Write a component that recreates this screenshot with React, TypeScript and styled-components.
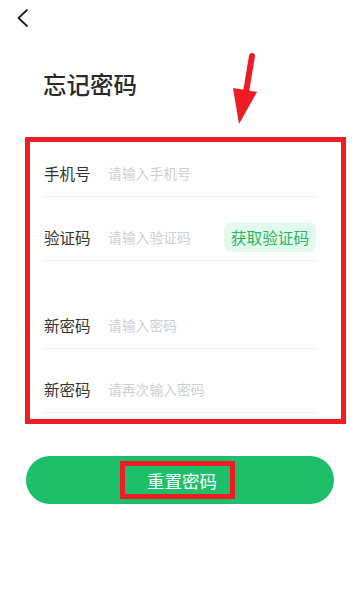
import React from "react";
import styled, { createGlobalStyle } from "styled-components";

const Global = createGlobalStyle`
  html, body { margin: 0; padding: 0; background: #ffffff; }
  body { font-family: "Noto Sans CJK SC", "Noto Sans", sans-serif; }
  * { box-sizing: border-box; }
`;

const Page = styled.div`
  position: relative;
  width: 360px;
  height: 610px;
  background: #ffffff;
  display: flex;
  flex-direction: column;
`;

const Header = styled.div`
  height: 34px;
  padding: 9px 0 0 16px;
  display: flex;
  align-items: flex-start;
`;

const BackButton = styled.button`
  border: none;
  background: none;
  padding: 0;
  width: 14px;
  height: 18px;
  display: flex;
  cursor: pointer;
`;

const Title = styled.h1`
  margin: 32px 0 0 43px;
  font-size: 23.5px;
  line-height: 36px;
  font-weight: 500;
  color: #2a2a2a;
  letter-spacing: 0;
`;

const FormBox = styled.div`
  margin: 35px 14px 0 25px;
  border: 5px solid #ee1c25;
  padding: 0 25px 6px 14px;
  display: flex;
  flex-direction: column;
`;

const Row = styled.div<{ $first?: boolean; $gap?: number }>`
  display: flex;
  align-items: center;
  height: ${(p) => (p.$first ? 55 : 64)}px;
  padding-top: ${(p) => (p.$first ? 8 : 17)}px;
  margin-top: ${(p) => p.$gap ?? 0}px;
  border-bottom: 1px solid #efefef;
`;

const Label = styled.label`
  width: 64px;
  flex-shrink: 0;
  font-size: 15.5px;
  color: #333333;
  line-height: 22px;
`;

const Field = styled.input`
  flex: 1;
  min-width: 0;
  border: none;
  outline: none;
  background: transparent;
  padding: 0;
  font-family: inherit;
  font-size: 13.8px;
  color: #333;
  &::placeholder { color: #cfcfcf; }
`;

const CodeButton = styled.button`
  flex-shrink: 0;
  width: 92px;
  height: 30px;
  border: none;
  border-radius: 8px;
  background: #e4f9ed;
  color: #1fba62;
  font-family: inherit;
  font-size: 15.7px;
  padding: 0;
  display: flex;
  align-items: center;
  justify-content: center;
`;

const Submit = styled.button`
  margin: 32px 26px 0 26px;
  height: 48px;
  border: none;
  border-radius: 24px;
  background: #1dbf6b;
  display: flex;
  align-items: center;
  justify-content: center;
  padding: 0;
  font-family: inherit;
`;

const SubmitText = styled.span`
  display: flex;
  align-items: center;
  height: 38px;
  margin-right: 5px;
  border: 5px solid #ee1c25;
  padding: 0 13px 0 22px;
  color: #ffffff;
  font-size: 17.5px;
  letter-spacing: 0;
`;

const Arrow = styled.svg`
  position: absolute;
  left: 228px;
  top: 50px;
`;

export default function App() {
  return (
    <Page>
      <Global />
      <Header>
        <BackButton aria-label="返回">
          <svg width="14" height="18" viewBox="0 0 14 18">
            <polyline points="11,1 2.5,9 11,17" fill="none" stroke="#1e1e1e" strokeWidth="1.8" strokeLinecap="round" strokeLinejoin="round" />
          </svg>
        </BackButton>
      </Header>
      <Title>忘记密码</Title>
      <FormBox>
        <Row $first>
          <Label>手机号</Label>
          <Field placeholder="请输入手机号" />
        </Row>
        <Row>
          <Label>验证码</Label>
          <Field placeholder="请输入验证码" />
          <CodeButton>获取验证码</CodeButton>
        </Row>
        <Row $gap={24}>
          <Label>新密码</Label>
          <Field placeholder="请输入密码" type="password" />
        </Row>
        <Row>
          <Label>新密码</Label>
          <Field placeholder="请再次输入密码" type="password" />
        </Row>
      </FormBox>
      <Submit>
        <SubmitText>重置密码</SubmitText>
      </Submit>
      <Arrow width="34" height="80" viewBox="0 0 34 80">
        <line x1="24" y1="6" x2="18" y2="42" stroke="#ee1c25" strokeWidth="6" strokeLinecap="round" />
        <polygon points="5,38 29,42 11,74" fill="#ee1c25" />
      </Arrow>
    </Page>
  );
}
